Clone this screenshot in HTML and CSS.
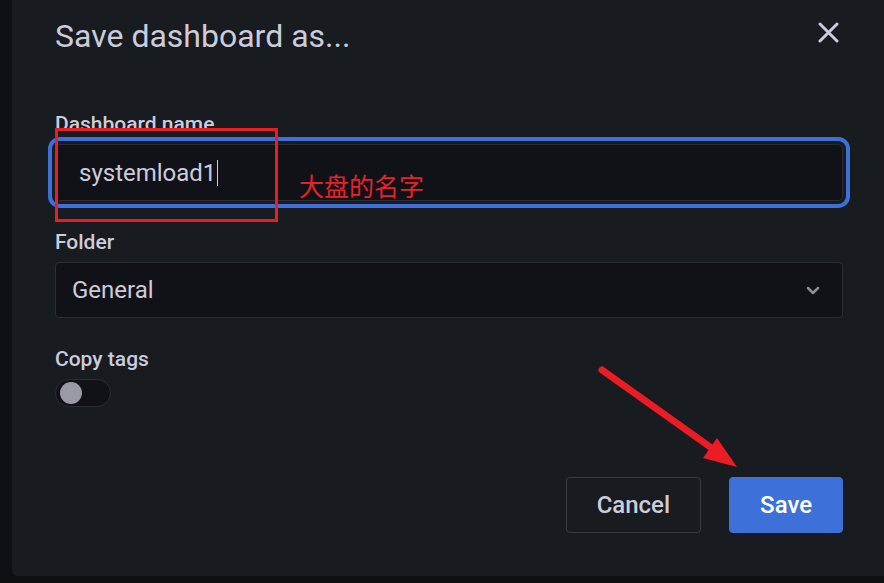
FILE: index.html
```html
<!DOCTYPE html>
<html lang="en">
<head>
    <meta charset="UTF-8">
    <title>Save dashboard as...</title>
    <link rel="stylesheet" href="styles.css">
</head>
<body>
    <div class="modal">
        <div class="modal-header">
            <h2 class="modal-title">Save dashboard as...</h2>
            <button class="close-btn" aria-label="Close">
                <svg width="21" height="21" viewBox="0 0 21 21">
                    <path d="M2 2 L19 19 M19 2 L2 19" stroke="#ccccdc" stroke-width="3" stroke-linecap="round"/>
                </svg>
            </button>
        </div>

        <div class="form">
            <div class="field">
                <label class="label">Dashboard name</label>
                <div class="input focused">systemload1<span class="caret"></span></div>
            </div>

            <div class="field">
                <label class="label">Folder</label>
                <div class="input select">
                    <span>General</span>
                    <svg width="14" height="9" viewBox="0 0 14 9">
                        <path d="M2 2 L7 7 L12 2" fill="none" stroke="#8e8e99" stroke-width="2.5" stroke-linecap="round" stroke-linejoin="round"/>
                    </svg>
                </div>
            </div>

            <div class="field">
                <label class="label">Copy tags</label>
                <div class="switch"><span class="knob"></span></div>
            </div>
        </div>

        <div class="modal-footer">
            <button class="btn btn-secondary">Cancel</button>
            <button class="btn btn-primary">Save</button>
        </div>
    </div>

    <!-- annotations drawn over the screenshot -->
    <div class="note-box"></div>
    <div class="note-text">大盘的名字</div>
    <svg class="note-arrow" width="884" height="583" viewBox="0 0 884 583">
        <line x1="602" y1="370" x2="713" y2="449" stroke="#ec1c24" stroke-width="7" stroke-linecap="round"/>
        <polygon points="737,467 703,458 717,438" fill="#ec1c24"/>
    </svg>
</body>
</html>
```

FILE: styles.css
```css
* {
    margin: 0;
    padding: 0;
    box-sizing: border-box;
}

body {
    font-family: Roboto, "Liberation Sans", sans-serif;
    background: #0e0f12;
    color: #ccccdc;
    width: 884px;
    height: 583px;
    overflow: hidden;
    position: relative;
}

.modal {
    margin-left: 12px;
    width: 872px;
    height: 576px;
    background: #181b1f;
    border-radius: 0 0 0 6px;
    padding: 18px 41px 0 43px;
    display: flex;
    flex-direction: column;
}

.modal-header {
    display: flex;
    justify-content: space-between;
    align-items: flex-start;
}

.modal-title {
    font-size: 32px;
    font-weight: 400;
    line-height: 36px;
    color: #ccccdc;
}

.close-btn {
    background: none;
    border: none;
    margin-top: 4px;
    margin-right: 4px;
    width: 21px;
    height: 21px;
    display: flex;
}

.form {
    margin-top: 58px;
}

.field {
    margin-bottom: 29px;
}

.label {
    display: block;
    font-size: 21px;
    font-weight: 500;
    line-height: 24px;
    margin-bottom: 8px;
}

.input {
    height: 56px;
    background: #111217;
    border: 1px solid #2b2d33;
    border-radius: 4px;
    font-size: 24px;
    color: #ccccdc;
    display: flex;
    align-items: center;
    padding-left: 23px;
}

.input.focused {
    height: 57px;
    box-shadow: 0 0 0 3px #181b1f, 0 0 0 7px #3d71d9;
    border-radius: 5px;
}

.caret {
    display: inline-block;
    width: 1px;
    height: 26px;
    background: #ccccdc;
    margin-left: 1px;
}

.select {
    padding-left: 16px;
    padding-right: 22px;
    justify-content: space-between;
}

.switch {
    width: 56px;
    height: 28px;
    background: #111217;
    border: 1px solid #2b2d33;
    border-radius: 14px;
    padding: 2px 4px;
}

.knob {
    display: block;
    width: 22px;
    height: 22px;
    border-radius: 50%;
    background: #9a99a6;
}

.modal-footer {
    margin-top: 41px;
    display: flex;
    justify-content: flex-end;
    gap: 28px;
}

.btn {
    height: 56px;
    padding: 0 30px;
    font-family: Roboto, "Liberation Sans", sans-serif;
    font-size: 24px;
    font-weight: 500;
    border-radius: 4px;
    cursor: pointer;
}

.btn-secondary {
    background: transparent;
    border: 1px solid #3a3c43;
    color: #ccccdc;
}

.btn-primary {
    background: #3d71d9;
    border: 1px solid #3d71d9;
    color: #fff;
}

.note-box {
    position: absolute;
    left: 55px;
    top: 128px;
    width: 223px;
    height: 94px;
    border: 3px solid #ea1c24;
}

.note-text {
    position: absolute;
    left: 299px;
    top: 173px;
    font-family: "Noto Sans CJK SC", sans-serif;
    font-size: 25px;
    line-height: 25px;
    color: #e8212a;
}

.note-arrow {
    position: absolute;
    left: 0;
    top: 0;
    pointer-events: none;
}
```
